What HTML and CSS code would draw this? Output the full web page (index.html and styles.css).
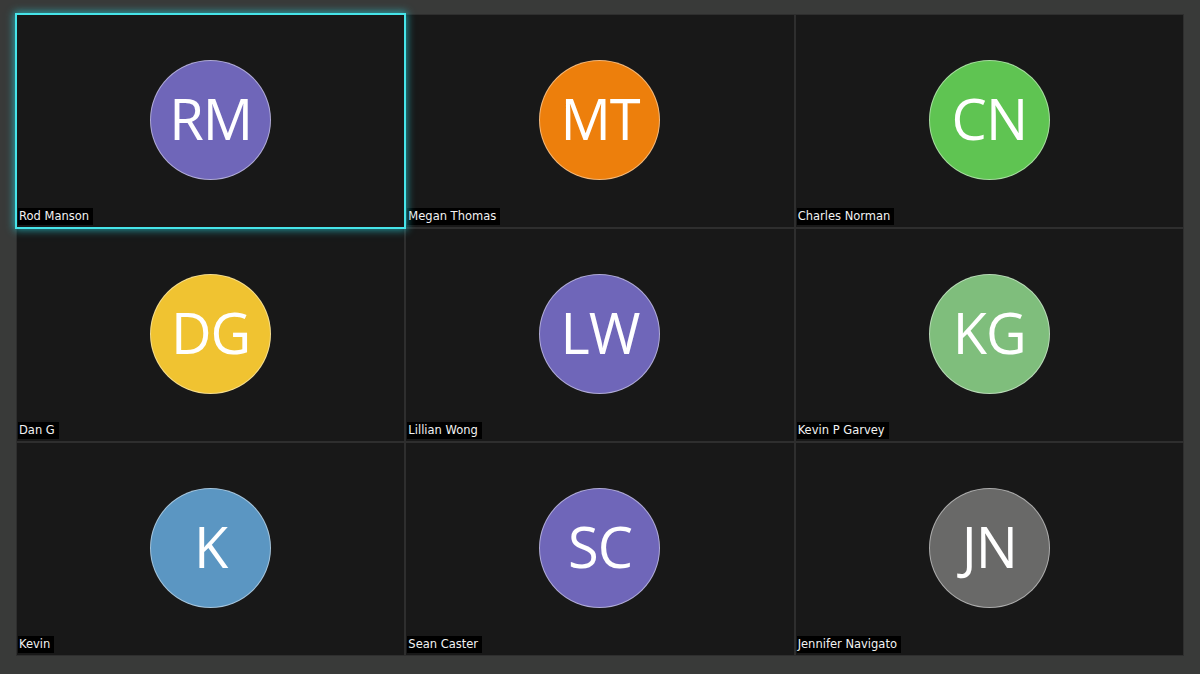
FILE: index.html
```html
<!DOCTYPE html>
<html lang="en">
<head>
    <meta charset="UTF-8">
    <meta name="viewport" content="width=device-width, initial-scale=1.0">
    <title>meeting gallery</title>
    <link rel="stylesheet" href="styles.css">
</head>
<body>
<div id="gallery">
    <div class="tile active">
        <div class="avatar purple">RM</div>
        <p class="name">Rod Manson</p>
    </div>
    <div class="tile">
        <div class="avatar orange">MT</div>
        <p class="name">Megan Thomas</p>
    </div>
    <div class="tile">
        <div class="avatar green">CN</div>
        <p class="name">Charles Norman</p>
    </div>

    <div class="tile">
        <div class="avatar yellow">DG</div>
        <p class="name">Dan G</p>
    </div>
    <div class="tile">
        <div class="avatar purple">LW</div>
        <p class="name">Lillian Wong</p>
    </div>
    <div class="tile">
        <div class="avatar sage">KG</div>
        <p class="name">Kevin P Garvey</p>
    </div>

    <div class="tile">
        <div class="avatar blue">K</div>
        <p class="name">Kevin</p>
    </div>
    <div class="tile">
        <div class="avatar purple">SC</div>
        <p class="name">Sean Caster</p>
    </div>
    <div class="tile">
        <div class="avatar grey">JN</div>
        <p class="name">Jennifer Navigato</p>
    </div>
</div>
</body>
</html>
```

FILE: styles.css
```css
* {
    padding: 0;
    margin: 0;
    box-sizing: border-box;
}
body {
    background: #393a39;
    width: 1200px;
    height: 674px;
    overflow: hidden;
}
#gallery {
    display: grid;
    grid-template-columns: repeat(3, 1fr);
    grid-template-rows: repeat(3, 1fr);
    gap: 2px;
    padding: 15px 17px 19px 17px;
    height: 674px;
}
.tile {
    position: relative;
    background-color: #181818;
    outline: 1px solid #2e2e2e;
    display: flex;
    align-items: center;
    justify-content: center;
    padding-bottom: 3px;
}
.tile.active {
    outline: 2px solid #46e4e9;
    box-shadow: 0 0 8px 3px rgba(40, 210, 220, 0.7);
    z-index: 2;
}

.avatar {
    width: 121px;
    height: 120px;
    border-radius: 50%;
    border: 1px solid rgba(255, 255, 255, 0.45);
    display: flex;
    align-items: center;
    justify-content: center;
    padding-bottom: 4px;
    font-family: "Open Sans", "DejaVu Sans", sans-serif;
    font-size: 56px;
    color: #ffffff;
    letter-spacing: -1px;
}
.purple { background-color: #6f66b9; }
.orange { background-color: #ed7f0c; }
.green  { background-color: #5fc452; }
.yellow { background-color: #f0c331; }
.sage   { background-color: #7fbe7c; }
.blue   { background-color: #5b96c2; }
.grey   { background-color: #696968; }

.name {
    position: absolute;
    left: 1px;
    bottom: 2px;
    background-color: #000000;
    color: #f2f2f2;
    font-family: "DejaVu Sans", sans-serif;
    font-size: 11.5px;
    line-height: 17px;
    padding: 0 4px 0 1px;
}
```
